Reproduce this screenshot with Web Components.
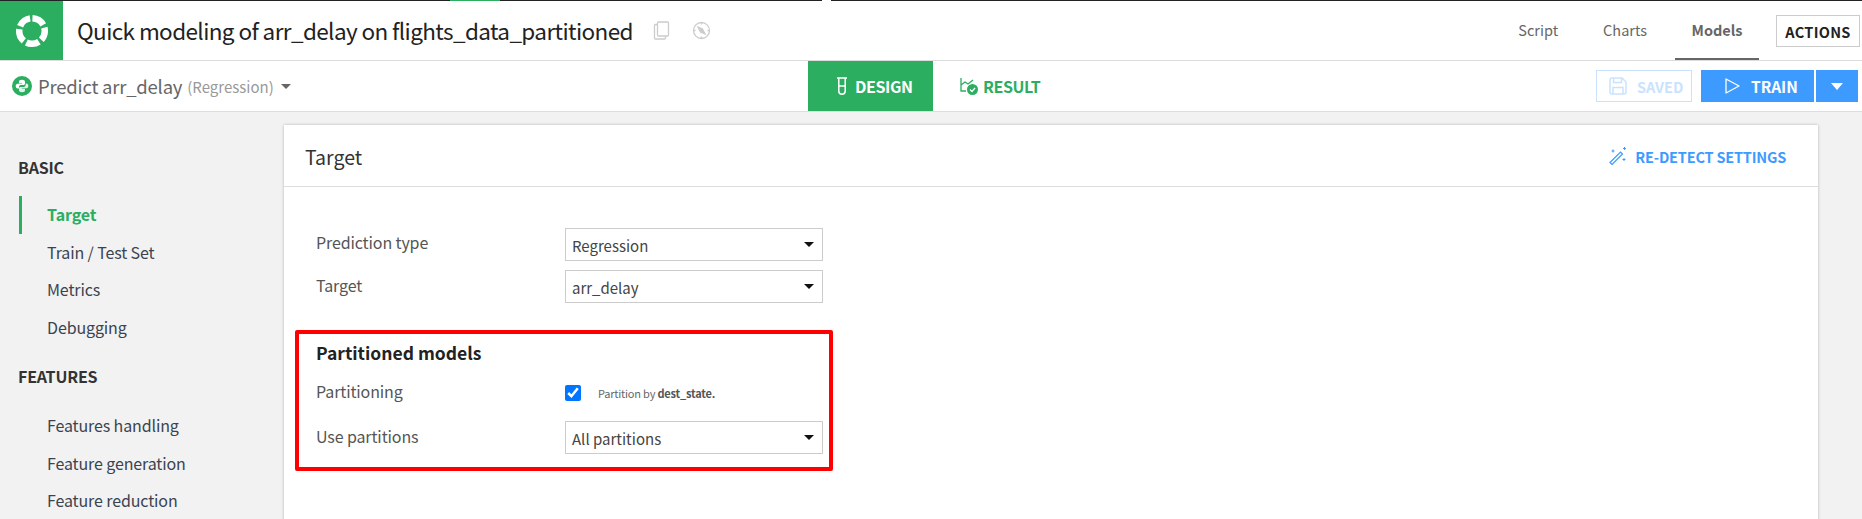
<!DOCTYPE html>
<html>
<head>
<meta charset="utf-8">
<title>Quick modeling</title>
<style>
  html, body { margin: 0; height: 519px; overflow: hidden; }
  body { font-family: "Noto Sans CJK JP", "Noto Sans", sans-serif; background: #f2f2f2; color: #333; }
</style>
</head>
<body>
<app-topline></app-topline>
<app-header></app-header>
<app-subbar></app-subbar>
<app-main>
  <side-nav slot="nav"></side-nav>
  <target-card slot="card"></target-card>
</app-main>

<script>
class AppTopline extends HTMLElement {
  constructor() {
    super();
    this.attachShadow({ mode: "open" });
    this.shadowRoot.innerHTML = `
      <style>
        :host { display: flex; height: 1px; background: #222; }
        .green { margin-left: 450px; width: 50px; background: #2bae60; }
        .gap { margin-left: 322px; width: 9px; background: #fff; }
      </style>
      <div class="green"></div><div class="gap"></div>
    `;
  }
}
customElements.define("app-topline", AppTopline);

class AppHeader extends HTMLElement {
  constructor() {
    super();
    this.attachShadow({ mode: "open" });
    this.shadowRoot.innerHTML = `
      <style>
        :host { display: flex; align-items: stretch; height: 59px; background: #fff; border-bottom: 1px solid #ddd; }
        .logo { width: 63px; background: #2bae60; display: flex; align-items: center; justify-content: center; }
        h1 { margin: 0 0 0 14px; font-size: 22.5px; line-height: 59px; font-weight: 400; color: #222; white-space: nowrap; letter-spacing: -.6px; }
        .icons { display: flex; align-items: center; gap: 22px; margin-left: 20px; }
        nav { margin-left: auto; display: flex; }
        a { padding: 0 17px; margin-left: 11px; font-size: 14.5px; line-height: 57px; color: #666; border-bottom: 2px solid transparent; }
        a.on { font-weight: 600; border-bottom-color: #666; padding: 0 16.500px; }
        button { margin: 14px 2px 0 17px; width: 84px; height: 32px; padding: 0; box-sizing: border-box; background: #fff; border: 1px solid #ccc; font: 600 14.5px "Noto Sans CJK JP", sans-serif; color: #222; letter-spacing: .3px; }
      </style>
      <div class="logo">
        <svg width="36" height="36" viewBox="0 0 36 36">
          <circle cx="18" cy="18" r="12.8" fill="none" stroke="#fff" stroke-width="6.500" stroke-dasharray="13.100 3" transform="rotate(-88 18 18)"/>
        </svg>
      </div>
      <h1>Quick modeling of arr_delay on flights_data_partitioned</h1>
      <div class="icons">
        <svg width="17" height="19" viewBox="0 0 17 19" fill="none" stroke="#ccc" stroke-width="1.3">
          <rect x="4.5" y="1" width="11" height="14" rx="1"/>
          <path d="M4.5 3.5H2.5a1 1 0 0 0-1 1V17a1 1 0 0 0 1 1h9a1 1 0 0 0 1-1v-2"/>
        </svg>
        <svg width="19" height="19" viewBox="0 0 19 19" fill="none" stroke="#ccc" stroke-width="1.3">
          <circle cx="9.5" cy="9.5" r="8"/>
          <path d="M6 6l4.5 2 2.500 5-4.500-2z" fill="#ccc"/>
          <path d="M9.500 1.500v2M9.500 15.500v2M1.500 9.500h2M15.500 9.500h2"/>
        </svg>
      </div>
      <nav>
        <a>Script</a><a>Charts</a><a class="on">Models</a>
      </nav>
      <button>ACTIONS</button>
    `;
  }
}
customElements.define("app-header", AppHeader);

class AppSubbar extends HTMLElement {
  constructor() {
    super();
    this.attachShadow({ mode: "open" });
    this.shadowRoot.innerHTML = `
      <style>
        :host { display: flex; height: 50px; background: #fff; border-bottom: 1px solid #ddd; }
        .left { width: 808px; box-sizing: border-box; padding-left: 12px; display: flex; align-items: center; color: #666; font-size: 18.500px; letter-spacing: -.22px; white-space: nowrap; }
        .left svg.py { margin-right: 6px; }
        .left small { font-size: 15px; color: #999; margin-left: 5px; letter-spacing: 0; }
        .caret { margin-left: 7px; width: 0; height: 0; border: 5px solid transparent; border-top: 5px solid #666; border-bottom: 0; }
        .tab { display: flex; align-items: center; font-size: 16px; font-weight: 600; letter-spacing: -.4px; }
        .design { width: 125px; background: #2bae60; color: #fff; box-sizing: border-box; padding-left: 29px; gap: 8px; }
        .result { color: #2bae60; padding-left: 27px; gap: 5px; }
        .right { margin-left: auto; display: flex; align-items: center; padding: 0 4px 0 0; }
        .saved { width: 96px; height: 32px; box-sizing: border-box; border: 1px solid #c9e3ff; color: #c9e3ff; display: flex; align-items: center; gap: 10px; padding-left: 12px; font-size: 14.5px; font-weight: 600; margin-right: 9px; }
        .train { width: 113px; height: 32px; background: #3d9bff; color: #fff; display: flex; align-items: center; box-sizing: border-box; padding-left: 24px; gap: 11px; font-size: 15.500px; font-weight: 600; }
        .more { width: 42px; height: 32px; margin-left: 2px; background: #3d9bff; display: flex; align-items: center; justify-content: center; }
        .more i { width: 0; height: 0; border: 6.500px solid transparent; border-top: 7px solid #fff; border-bottom: 0; }
      </style>
      <div class="left">
        <svg class="py" width="20" height="20" viewBox="0 0 20 20">
          <circle cx="10" cy="10" r="10" fill="#2bae60"/>
          <path d="M10 3.800c-2.300 0-3 .8-3 2v1.400h3.200v.6H5.700c-1.200 0-2 .9-2 2.300s.8 2.300 1.900 2.300H7v-1.500c0-1 .8-1.800 1.800-1.800h2.700c.8 0 1.500-.7 1.500-1.500V5.800c0-1.200-1.100-2-3-2z" fill="#fff"/>
          <path d="M10 16.200c2.300 0 3-.8 3-2v-1.400H9.800v-.6h4.500c1.200 0 2-.9 2-2.300s-.8-2.300-1.900-2.300H13.600v1.500c0 1-.8 1.800-1.800 1.800H8.500c-.8 0-1.500.7-1.500 1.500v1.800c0 1.200 1.100 2 3 2z" fill="#fff" opacity=".85"/>
        </svg>
        <span>Predict arr_delay</span><small>(Regression)</small><span class="caret"></span>
      </div>
      <div class="tab design">
        <svg width="10" height="18" viewBox="0 0 10 18" fill="none" stroke="#fff" stroke-width="1.500">
          <path d="M0 1h10M1.800 1v13a3.200 3.200 0 0 0 6.400 0V1M1.800 9h6.400"/>
        </svg>
        DESIGN
      </div>
      <div class="tab result">
        <svg width="18" height="18" viewBox="0 0 18 18" fill="none">
          <path d="M1 1v13h5M1 8l4-3 3 2 5-4" stroke="#2bae60" stroke-width="1.300"/>
          <circle cx="12.500" cy="12.500" r="5.500" fill="#2bae60"/>
          <path d="M10 12.500l2 2 3-3.500" stroke="#fff" stroke-width="1.300"/>
        </svg>
        RESULT
      </div>
      <div class="right">
        <div class="saved">
          <svg width="18" height="18" viewBox="0 0 18 18" fill="none" stroke="#c9e3ff" stroke-width="1.500">
            <path d="M1 3a2 2 0 0 1 2-2h10l4 4v10a2 2 0 0 1-2 2H3a2 2 0 0 1-2-2z"/>
            <path d="M4.500 1v4.500h8V1M4 17v-6.500h10V17"/>
          </svg>
          SAVED
        </div>
        <div class="train">
          <svg width="15" height="16" viewBox="0 0 15 16" fill="none" stroke="#fff" stroke-width="1.300" stroke-linejoin="round">
            <path d="M1 1l13 7-13 7z"/>
          </svg>
          TRAIN
        </div>
        <div class="more"><i></i></div>
      </div>
    `;
  }
}
customElements.define("app-subbar", AppSubbar);

class AppMain extends HTMLElement {
  constructor() {
    super();
    this.attachShadow({ mode: "open" });
    this.shadowRoot.innerHTML = `
      <style>
        :host { display: flex; align-items: flex-start; }
        .nav { width: 284px; flex: none; }
        .card { width: 1534px; flex: none; padding-top: 13px; }
      </style>
      <div class="nav"><slot name="nav"></slot></div>
      <div class="card"><slot name="card"></slot></div>
    `;
  }
}
customElements.define("app-main", AppMain);

class SideNav extends HTMLElement {
  constructor() {
    super();
    this.attachShadow({ mode: "open" });
    this.shadowRoot.innerHTML = `
      <style>
        :host { display: block; padding: 42px 0 0 18px; color: #333; }
        h4 { margin: 0; font-size: 16px; line-height: 26px; font-weight: 700; color: #333; letter-spacing: -.2px; }
        ul { list-style: none; margin: 16px 0 0; padding: 0; }
        ul + h4 { margin-top: 17px; }
        ul + h4 + ul { margin-top: 18px; }
        li { font-size: 16px; line-height: 37.500px; padding-left: 29px; color: #3b4350; letter-spacing: -.12px; }
        li.on { color: #2bae60; font-weight: 600; margin-left: 1px; padding-left: 25px; border-left: 3px solid #2bae60; }
      </style>
      <h4>BASIC</h4>
      <ul>
        <li class="on">Target</li>
        <li>Train / Test Set</li>
        <li>Metrics</li>
        <li>Debugging</li>
      </ul>
      <h4>FEATURES</h4>
      <ul>
        <li>Features handling</li>
        <li>Feature generation</li>
        <li>Feature reduction</li>
      </ul>
    `;
  }
}
customElements.define("side-nav", SideNav);

class UiSelect extends HTMLElement {
  constructor() {
    super();
    this.attachShadow({ mode: "open" });
    this.shadowRoot.innerHTML = `
      <style>
        :host { display: flex; align-items: center; justify-content: space-between; box-sizing: border-box; width: 258px; height: 33px; background: #fff; border: 1px solid #ccc; padding: 0 8px 0 6px; font-size: 15px; color: #444; }
        i { width: 0; height: 0; border: 5.500px solid transparent; border-top: 5px solid #111; border-bottom: 0; margin-top: -1px; }
        span { line-height: 31px; padding-top: 1px; }
      </style>
      <span><slot></slot></span><i></i>
    `;
  }
}
customElements.define("ui-select", UiSelect);

class FormRow extends HTMLElement {
  constructor() {
    super();
    this.attachShadow({ mode: "open" });
    this.shadowRoot.innerHTML = `
      <style>
        :host { display: grid; grid-template-columns: 249px 258px; align-items: center; font-size: 16px; color: #555; }
        label { line-height: 26px; margin-top: -4px; letter-spacing: -.12px; }
      </style>
      <label><slot name="label"></slot></label>
      <div><slot></slot></div>
    `;
  }
}
customElements.define("form-row", FormRow);

class TargetCard extends HTMLElement {
  constructor() {
    super();
    this.attachShadow({ mode: "open" });
    this.shadowRoot.innerHTML = `
      <style>
        :host { display: block; height: 400px; background: #fff; box-shadow: 0 0 3px rgba(0,0,0,.25); }
        header { display: flex; align-items: center; justify-content: space-between; height: 61px; border-bottom: 1px solid #ddd; padding: 0 32px 0 21px; }
        h2 { margin: 2px 0 0; font-size: 19.500px; font-weight: 400; color: #333; }
        .detect { display: flex; align-items: center; gap: 8px; color: #3d9bff; font-size: 14.500px; font-weight: 600; letter-spacing: -.2px; margin-top: 1px; }
        .form { padding: 41px 0 0 32px; display: flex; flex-direction: column; gap: 10px; }
        .red { margin: 27px 0 0 11px; width: 538px; height: 141px; box-sizing: border-box; border: 4px solid #f00; border-radius: 2px; padding: 4px 0 0 17px; }
        h3 { margin: 0; font-size: 17.500px; line-height: 30px; font-weight: 600; color: #222; }
        .p1 { height: 33px; margin-top: 8.500px; }
        .p2 { margin-top: 11.500px; }
        .check { display: flex; align-items: center; gap: 17px; font-size: 11px; color: #666; margin-top: -1px; letter-spacing: -.2px; }
        .check b { font-weight: 600; color: #555; }
        input { margin: 0; width: 16px; height: 16px; accent-color: #0075ff; }
        .up { display: block; margin-top: -1px; }
      </style>
      <header>
        <h2>Target</h2>
        <div class="detect">
          <svg width="18" height="18" viewBox="0 0 18 18" fill="none" stroke="#3d9bff" stroke-width="1.200">
            <path d="M1 15.500L11.500 5l2 2L3 17.500z"/>
            <path d="M2.500 4h3M4 2.500v3M15.500 0v3M14 1.500h3M13.500 12.500h3M15 11v3" stroke-width="1"/>
          </svg>
          RE-DETECT SETTINGS
        </div>
      </header>
      <div class="form">
        <form-row><span slot="label" class="up">Prediction type</span><ui-select>Regression</ui-select></form-row>
        <form-row style="margin-top:-1px"><span slot="label">Target</span><ui-select>arr_delay</ui-select></form-row>
      </div>
      <div class="red">
        <h3>Partitioned models</h3>
        <form-row class="p1"><span slot="label">Partitioning</span>
          <div class="check"><input type="checkbox" checked><span>Partition by <b>dest_state.</b></span></div>
        </form-row>
        <form-row class="p2"><span slot="label">Use partitions</span><ui-select>All partitions</ui-select></form-row>
      </div>
    `;
  }
}
customElements.define("target-card", TargetCard);
</script>
</body>
</html>
